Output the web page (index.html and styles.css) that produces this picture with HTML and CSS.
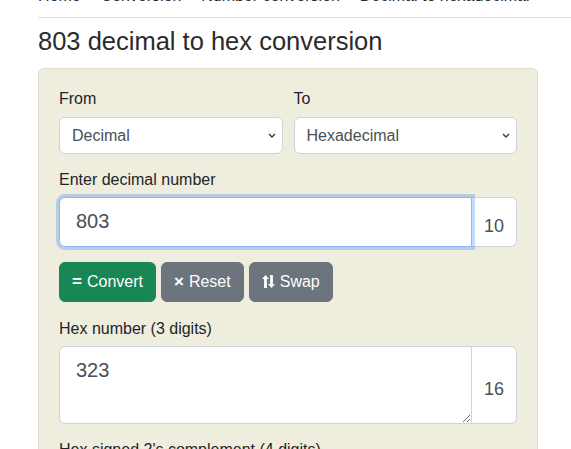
FILE: index.html
```html
<!DOCTYPE html>
<html lang="en">
<head>
    <meta charset="UTF-8">
    <meta name="viewport" content="width=device-width, initial-scale=1.0">
    <title>803 decimal to hex conversion</title>
    <link rel="stylesheet" href="styles.css">
</head>
<body>
    <div class="page">
        <!-- Breadcrumb -->
        <nav class="breadcrumb">
            <span>Home</span><span class="sep">›</span>
            <span>Conversion</span><span class="sep">›</span>
            <span>Number conversion</span><span class="sep">›</span>
            <span>Decimal to hexadecimal</span>
        </nav>
        <hr class="rule">

        <h1>803 decimal to hex conversion</h1>

        <!-- Converter -->
        <form class="card" id="convForm">
            <div class="two-cols">
                <div>
                    <label for="from">From</label>
                    <select id="from" class="select">
                        <option>Decimal</option>
                    </select>
                </div>
                <div>
                    <label for="to">To</label>
                    <select id="to" class="select">
                        <option>Hexadecimal</option>
                    </select>
                </div>
            </div>

            <div class="field">
                <label for="number">Enter decimal number</label>
                <div class="input-group">
                    <input type="text" id="number" class="input focused" value="803">
                    <span class="addon">10</span>
                </div>
            </div>

            <div class="buttons">
                <button type="button" class="btn btn-green"><b>=</b> Convert</button>
                <button type="button" class="btn btn-gray"><b>&times;</b> Reset</button>
                <button type="button" class="btn btn-gray">
                    <svg class="icon" width="13" height="13" viewBox="0 0 13 13">
                        <path d="M3.5 0 L7 4 H4.9 V13 H2.1 V4 H0 Z" fill="currentColor"/>
                        <path d="M9.5 13 L6 9 H8.1 V0 H10.9 V9 H13 Z" fill="currentColor"/>
                    </svg>
                    Swap
                </button>
            </div>

            <div class="field result">
                <label for="result">Hex number (3 digits)</label>
                <div class="input-group">
                    <textarea id="result" class="input area">323</textarea>
                    <span class="addon">16</span>
                </div>
            </div>

            <div class="field">
                <label>Hex signed 2's complement (4 digits)</label>
            </div>
        </form>
    </div>
</body>
</html>
```

FILE: styles.css
```css
/* General Styling */
body {
    font-family: "Liberation Sans", Arial, sans-serif;
    font-size: 16px;
    line-height: 1.5;
    color: #212529;
    background-color: #fff;
    margin: 0;
    overflow: hidden;
}

.page {
    padding-left: 38px;
}

.breadcrumb {
    margin-top: -16px;
    height: 24px;
    white-space: nowrap;
}

.breadcrumb .sep {
    margin: 0 5px;
    color: #6c757d;
}

.rule {
    border: 0;
    border-top: 1px solid #dcdcdc;
    margin: 9px 0 0 0;
}

h1 {
    font-size: 25.5px;
    font-weight: 400;
    line-height: 1.2;
    color: #2b2b2b;
    margin: 8px 0 11px 0;
}

/* Card */
.card {
    width: 458px;
    padding: 18px 20px;
    background-color: #efedde;
    border: 1px solid #dedcd0;
    border-radius: 6px;
}

label {
    display: block;
    margin-bottom: 6px;
}

.two-cols {
    display: grid;
    grid-template-columns: 1fr 1fr;
    gap: 11px;
}

.select {
    display: block;
    width: 100%;
    height: 37px;
    padding: 0 12px;
    font-family: inherit;
    font-size: 16px;
    color: #495057;
    background-color: #fff;
    background-image: url("data:image/svg+xml,%3Csvg xmlns='http://www.w3.org/2000/svg' width='8' height='5' viewBox='0 0 8 5'%3E%3Cpath d='M1 1l3 3 3-3' fill='none' stroke='%23343a40' stroke-width='1.4'/%3E%3C/svg%3E");
    background-repeat: no-repeat;
    background-position: right 6px center;
    border: 1px solid #ced4da;
    border-radius: 6px;
    appearance: none;
    -webkit-appearance: none;
}

.field {
    margin-top: 14px;
}

.field.result {
    margin-top: 15px;
}

.field label {
    margin-bottom: 5px;
}

/* Input groups */
.input-group {
    display: flex;
}

.input {
    flex: 1;
    min-width: 0;
    font-family: inherit;
    font-size: 20px;
    line-height: 1.5;
    color: #495057;
    padding: 0 16px;
    background-color: #fff;
    border: 1px solid #ced4da;
    border-radius: 6px 0 0 6px;
    outline: none;
}

.input.focused {
    height: 48px;
    border-color: #86b7fe;
    border-radius: 6px 0 0 6px;
    box-shadow: 0 0 0 3px rgba(13, 110, 253, 0.25);
    position: relative;
    z-index: 1;
}

.area {
    height: 78px;
    padding: 8px 16px;
    resize: vertical;
    box-sizing: border-box;
}

.addon {
    display: flex;
    align-items: center;
    padding: 10px 12px 0 12px;
    font-size: 18px;
    color: #495057;
    background-color: #fff;
    border: 1px solid #ced4da;
    border-left: none;
    border-radius: 0 6px 6px 0;
}

/* Buttons */
.buttons {
    display: flex;
    gap: 5px;
    margin-top: 15px;
}

.btn {
    display: inline-flex;
    align-items: center;
    gap: 5px;
    height: 40px;
    padding: 0 12px;
    font-family: inherit;
    font-size: 16px;
    color: #fff;
    border: 1px solid transparent;
    border-radius: 6px;
    cursor: pointer;
}

.btn b {
    font-size: 17px;
}

.btn-green {
    background-color: #198754;
    border-color: #198754;
}

.btn-gray {
    background-color: #6c757d;
    border-color: #6c757d;
}
```
